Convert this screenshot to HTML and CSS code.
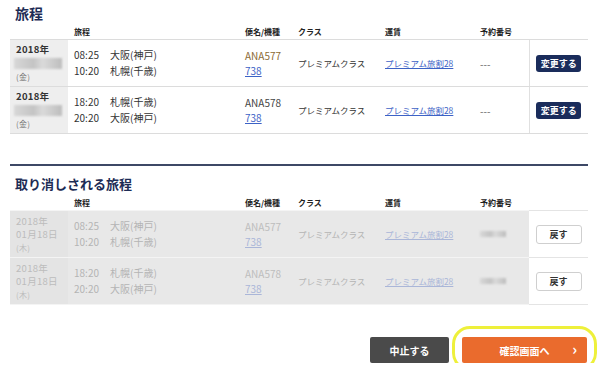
FILE: index.html
```html
<!DOCTYPE html>
<html lang="ja">
<head>
    <meta charset="UTF-8">
    <title>旅程の変更</title>
    <link rel="stylesheet" href="styles.css">
</head>
<body>
    <h2 class="section-title">旅程</h2>
    <table class="trip-table">
        <colgroup>
            <col class="c-date"><col class="c-trip"><col class="c-flight"><col class="c-class">
            <col class="c-fare"><col class="c-ref"><col class="c-btn">
        </colgroup>
        <thead>
            <tr><th></th><th>旅程</th><th>便名/機種</th><th>クラス</th><th>運賃</th><th>予約番号</th><th></th></tr>
        </thead>
        <tbody>
            <tr>
                <td class="date"><div>2018年</div><div class="blur"></div><div class="dow">(金)</div></td>
                <td class="trip">
                    <div><span class="time">08:25</span>大阪(神戸)</div>
                    <div><span class="time">10:20</span>札幌(千歳)</div>
                </td>
                <td><div class="flight hl">ANA577</div><a href="#">738</a></td>
                <td class="small-text">プレミアムクラス</td>
                <td class="small-text"><a href="#">プレミアム旅割28</a></td>
                <td class="ref">---</td>
                <td class="btn-cell"><button class="btn-change">変更する</button></td>
            </tr>
            <tr>
                <td class="date"><div>2018年</div><div class="blur"></div><div class="dow">(金)</div></td>
                <td class="trip">
                    <div><span class="time">18:20</span>札幌(千歳)</div>
                    <div><span class="time">20:20</span>大阪(神戸)</div>
                </td>
                <td><div class="flight">ANA578</div><a href="#">738</a></td>
                <td class="small-text">プレミアムクラス</td>
                <td class="small-text"><a href="#">プレミアム旅割28</a></td>
                <td class="ref">---</td>
                <td class="btn-cell"><button class="btn-change">変更する</button></td>
            </tr>
        </tbody>
    </table>

    <hr class="divider">

    <h2 class="section-title small">取り消しされる旅程</h2>
    <table class="trip-table cancelled">
        <colgroup>
            <col class="c-date"><col class="c-trip"><col class="c-flight"><col class="c-class">
            <col class="c-fare"><col class="c-ref"><col class="c-btn">
        </colgroup>
        <thead>
            <tr><th></th><th>旅程</th><th>便名/機種</th><th>クラス</th><th>運賃</th><th>予約番号</th><th></th></tr>
        </thead>
        <tbody>
            <tr>
                <td class="date"><div>2018年</div><div>01月18日</div><div class="dow">(木)</div></td>
                <td class="trip">
                    <div><span class="time">08:25</span>大阪(神戸)</div>
                    <div><span class="time">10:20</span>札幌(千歳)</div>
                </td>
                <td><div class="flight">ANA577</div><a href="#">738</a></td>
                <td class="small-text">プレミアムクラス</td>
                <td class="small-text"><a href="#">プレミアム旅割28</a></td>
                <td class="ref"><div class="blur small"></div></td>
                <td class="btn-cell"><button class="btn-back">戻す</button></td>
            </tr>
            <tr>
                <td class="date"><div>2018年</div><div>01月18日</div><div class="dow">(木)</div></td>
                <td class="trip">
                    <div><span class="time">18:20</span>札幌(千歳)</div>
                    <div><span class="time">20:20</span>大阪(神戸)</div>
                </td>
                <td><div class="flight">ANA578</div><a href="#">738</a></td>
                <td class="small-text">プレミアムクラス</td>
                <td class="small-text"><a href="#">プレミアム旅割28</a></td>
                <td class="ref"><div class="blur small"></div></td>
                <td class="btn-cell"><button class="btn-back">戻す</button></td>
            </tr>
        </tbody>
    </table>

    <div class="actions">
        <button class="btn-cancel">中止する</button>
        <div class="confirm-wrap">
            <button class="btn-confirm">確認画面へ<span class="chev">&#x203A;</span></button>
        </div>
    </div>
</body>
</html>
```

FILE: styles.css
```css
body {
    font-family: "Noto Sans CJK JP", "Noto Sans", sans-serif;
    font-size: 10px;
    color: #333;
    background-color: #fff;
    margin: 0;
    padding: 0 12px 0 10px;
}
.section-title {
    margin: 0;
    padding: 3px 0 0 5px;
    font-size: 14px;
    line-height: 20px;
    color: #1d2c55;
}
.section-title.small {
    font-size: 13px;
    padding-top: 0;
}
.trip-table {
    width: 578px;
    table-layout: fixed;
    border-collapse: collapse;
}
.c-date { width: 58px; }
.c-trip { width: 171px; }
.c-flight { width: 53px; }
.c-class { width: 87px; }
.c-fare { width: 95px; }
.c-ref { width: 55px; }
.c-btn { width: 59px; }
.trip-table th {
    text-align: left;
    font-size: 8px;
    font-weight: bold;
    color: #222;
    padding: 0 0 0 6px;
    height: 16px;
    vertical-align: middle;
}
.trip-table td {
    padding: 0 0 0 6px;
    height: 46px;
    border-top: 1px solid #dcdcdc;
    border-bottom: 1px solid #dcdcdc;
    vertical-align: middle;
    white-space: nowrap;
    line-height: 15px;
}
.trip-table td.small-text {
    font-size: 8.5px;
}
.trip-table td.date {
    background-color: #eeeeee;
    font-weight: bold;
    font-size: 9.5px;
    line-height: 13px;
    letter-spacing: 0.3px;
}
.date .dow {
    font-size: 8px;
    font-weight: normal;
    color: #777;
}
.blur {
    width: 48px;
    height: 11px;
    margin: 2px 0 1px -2px;
    background: linear-gradient(90deg, #d8d8d8, #c4c4c4 40%, #dadada 60%, #bdbdbd);
    filter: blur(1.2px);
}
.blur.small {
    width: 26px;
    height: 6px;
    margin: 0;
}
.trip div {
    line-height: 16px;
}
.time {
    display: inline-block;
    width: 36px;
}
.flight {
    color: #444;
}
.flight.hl {
    color: #8c6a34;
}
a {
    color: #3c62c6;
    text-decoration: underline;
}
.ref {
    color: #666;
}
.trip-table td.btn-cell {
    border-left: 1px solid #e0e0e0;
    padding: 0;
    text-align: center;
}
.btn-change {
    font-family: inherit;
    font-size: 9px;
    font-weight: bold;
    color: #fff;
    background-color: #1a2c5b;
    border: none;
    border-radius: 3px;
    width: 45px;
    padding: 0;
    height: 17px;
}
.divider {
    border: none;
    height: 2px;
    background-color: #3d4866;
    margin: 30px 0 8px;
    width: 578px;
}
.cancelled tbody td {
    background-color: #e8e8e8;
    color: #b4b4b4;
    border-color: #f4f4f4;
}
.cancelled tbody td.date {
    background-color: #e4e4e4;
    font-weight: normal;
    color: #bcbcbc;
}
.cancelled .date .dow {
    color: #bcbcbc;
}
.cancelled .flight {
    color: #bdbdbd;
}
.cancelled a {
    color: #aab6d8;
}
.cancelled tbody td.btn-cell {
    background-color: #fff;
    border-left: none;
    border-color: #e4e4e4;
}
.btn-back {
    font-family: inherit;
    font-size: 9px;
    font-weight: bold;
    color: #333;
    background-color: #fff;
    border: 1px solid #cfcfcf;
    border-radius: 3px;
    width: 46px;
    height: 19px;
    padding: 0;
}
.actions {
    display: flex;
    justify-content: flex-end;
    align-items: center;
    gap: 13px;
    width: 577px;
    margin-top: 32px;
}
.btn-cancel {
    font-family: inherit;
    font-size: 10px;
    font-weight: bold;
    color: #fff;
    background-color: #4a4a4a;
    border: none;
    border-radius: 2px;
    width: 79px;
    height: 26px;
}
.confirm-wrap {
    position: relative;
}
.confirm-wrap::after {
    content: "";
    position: absolute;
    left: -10px;
    right: -10px;
    top: -11px;
    bottom: -8px;
    border: 3px solid #eef03a;
    border-radius: 18px;
}
.btn-confirm {
    position: relative;
    font-family: inherit;
    font-size: 10px;
    font-weight: bold;
    color: #fff;
    background-color: #ea6b2d;
    border: none;
    border-radius: 2px;
    width: 125px;
    height: 26px;
    display: block;
}
.chev {
    position: absolute;
    right: 10px;
    top: 3px;
    font-size: 15px;
    line-height: 18px;
}
```
